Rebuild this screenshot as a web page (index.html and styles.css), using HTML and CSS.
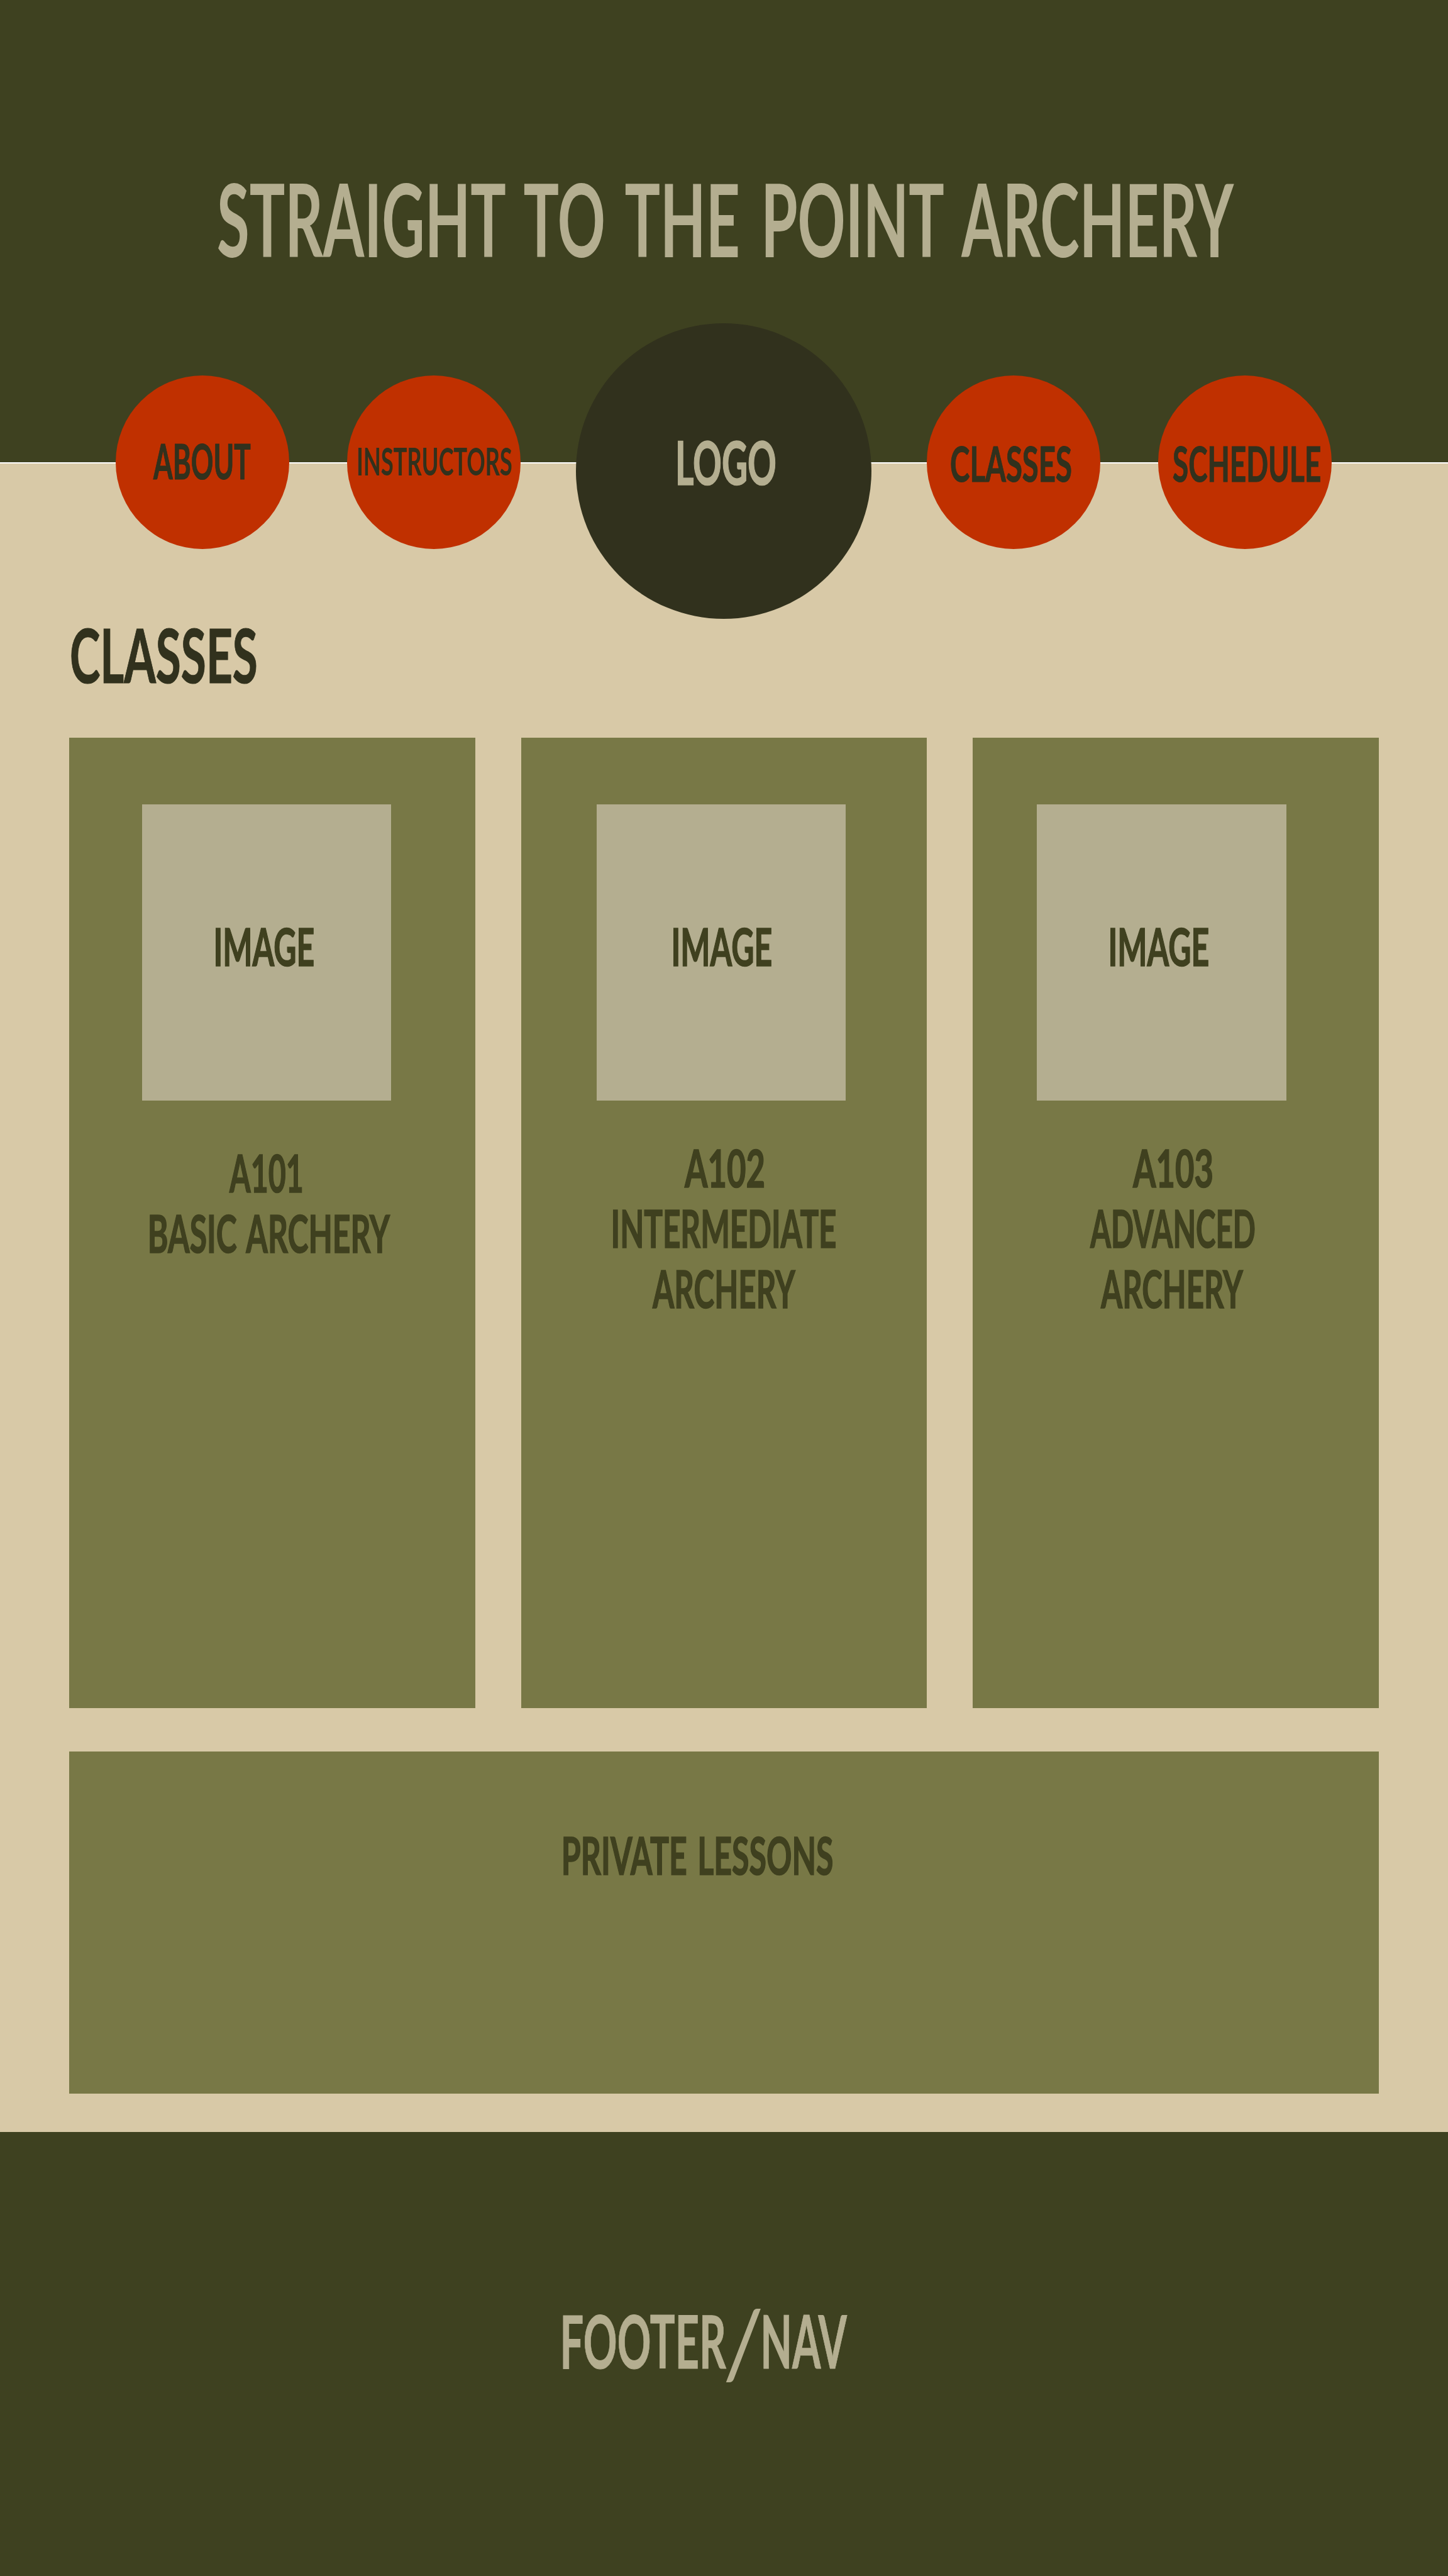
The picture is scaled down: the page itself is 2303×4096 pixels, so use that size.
FILE: index.html
```html
<!DOCTYPE html>
<html lang="en">
<head>
<meta charset="utf-8">
<title>Straight to the Point Archery</title>
<link rel="stylesheet" href="styles.css">
</head>
<body>
<header class="banner">
  <h1 class="banner-title">
    <svg class="label label-title" width="1613" height="116"><text x="-4.7" y="116" textLength="2526.6" lengthAdjust="spacingAndGlyphs">STRAIGHT TO THE POINT ARCHERY</text></svg>
  </h1>
</header>
<nav class="nav">
  <a class="disc disc-about"><svg class="label label-nav" width="154" height="55"><text x="0" y="55" textLength="242" lengthAdjust="spacingAndGlyphs">ABOUT</text></svg></a>
  <a class="disc disc-instructors"><svg class="label label-nav-small" width="244" height="44"><text x="-5" y="44" textLength="387" lengthAdjust="spacingAndGlyphs">INSTRUCTORS</text></svg></a>
  <a class="disc disc-logo"><svg class="label label-logo" width="153" height="69"><text x="-7.8" y="69" textLength="251.5" lengthAdjust="spacingAndGlyphs">LOGO</text></svg></a>
  <a class="disc disc-classes"><svg class="label label-nav" width="190" height="55"><text x="-3" y="55" textLength="303" lengthAdjust="spacingAndGlyphs">CLASSES</text></svg></a>
  <a class="disc disc-schedule"><svg class="label label-nav" width="232" height="55"><text x="-3" y="55" textLength="369" lengthAdjust="spacingAndGlyphs">SCHEDULE</text></svg></a>
</nav>
<main class="content">
  <h2 class="section-title"><svg class="label label-heading" width="293" height="86"><text x="-4.7" y="86" textLength="467" lengthAdjust="spacingAndGlyphs">CLASSES</text></svg></h2>
  <section class="cards">
    <article class="card card-basic">
      <div class="thumb"><svg class="label label-card" width="155" height="60"><text x="-5.5" y="60" textLength="251" lengthAdjust="spacingAndGlyphs">IMAGE</text></svg></div>
      <div class="caption">
        <svg class="label label-card code" width="112" height="60"><text x="-1.5" y="60" textLength="184" lengthAdjust="spacingAndGlyphs">A101</text></svg>
        <svg class="label label-card" width="381" height="60"><text x="-6.5" y="60" textLength="602" lengthAdjust="spacingAndGlyphs">BASIC ARCHERY</text></svg>
      </div>
    </article>
    <article class="card card-intermediate">
      <div class="thumb"><svg class="label label-card" width="155" height="60"><text x="-5.5" y="60" textLength="251" lengthAdjust="spacingAndGlyphs">IMAGE</text></svg></div>
      <div class="caption">
        <svg class="label label-card" width="125" height="60"><text x="0" y="60" textLength="200" lengthAdjust="spacingAndGlyphs">A102</text></svg>
        <svg class="label label-card" width="353" height="60"><text x="-5.5" y="60" textLength="561" lengthAdjust="spacingAndGlyphs">INTERMEDIATE</text></svg>
        <svg class="label label-card" width="227" height="60"><text x="0" y="60" textLength="354.5" lengthAdjust="spacingAndGlyphs">ARCHERY</text></svg>
      </div>
    </article>
    <article class="card card-advanced">
      <div class="thumb"><svg class="label label-card" width="155" height="60"><text x="-5.5" y="60" textLength="251" lengthAdjust="spacingAndGlyphs">IMAGE</text></svg></div>
      <div class="caption">
        <svg class="label label-card" width="125" height="60"><text x="0" y="60" textLength="200" lengthAdjust="spacingAndGlyphs">A103</text></svg>
        <svg class="label label-card" width="261" height="60"><text x="0" y="60" textLength="411" lengthAdjust="spacingAndGlyphs">ADVANCED</text></svg>
        <svg class="label label-card" width="226" height="60"><text x="0" y="60" textLength="353" lengthAdjust="spacingAndGlyphs">ARCHERY</text></svg>
      </div>
    </article>
  </section>
  <section class="private">
    <svg class="label label-card" width="427" height="60"><text x="-6.5" y="60" textLength="676" lengthAdjust="spacingAndGlyphs">PRIVATE LESSONS</text></svg>
  </section>
</main>
<footer class="footer">
  <svg class="label label-footer" width="450" height="84"><text x="-8.5" y="84"><tspan textLength="413" lengthAdjust="spacingAndGlyphs">FOOTER</tspan><tspan class="slash" x="397" dy="15" textLength="101" lengthAdjust="spacingAndGlyphs">/</tspan><tspan x="490" dy="-15" textLength="214.5" lengthAdjust="spacingAndGlyphs">NAV</tspan></text></svg>
</footer>
</body>
</html>
```
FILE: styles.css
```css
* { box-sizing: border-box; }
body {
  margin: 0;
  width: 2303px;
  height: 4096px;
  display: flex;
  flex-direction: column;
  background: #d8c9a7;
  font-family: Lato, "Liberation Sans", sans-serif;
  font-weight: 700;
}
h1, h2 { margin: 0; font-size: inherit; }

/* Condensed display lettering */
.label { display: block; flex: none; overflow: visible; }
.label text {
  transform: scaleX(0.64);
  vector-effect: non-scaling-stroke;
}

.banner {
  height: 737px;
  flex: none;
  padding: 292.5px 0 0 348px;
  background: #3e4120;
  border-bottom: 2px solid #fff;
}
.label-title { fill: #b4ae90; font-size: 161px; word-spacing: 18px; }

.nav {
  flex: none;
  display: flex;
  align-items: flex-start;
  height: 471px;
  margin-top: -223.4px;
  padding-left: 184px;
}
.disc {
  flex: none;
  display: flex;
  align-items: center;
  justify-content: center;
  width: 276px;
  height: 276px;
  margin-top: 83.1px;
  border-radius: 50%;
  background: #c03000;
  fill: #31311d;
}
.disc-about { padding-right: 3px; }
.disc-instructors { margin-left: 92px; padding-left: 3px; padding-bottom: 1px; }
.disc-logo {
  width: 470.5px;
  height: 470.5px;
  margin: 0 87.5px;
  padding: 0 0 24px 10px;
  background: #31311d;
  fill: #b4ae90;
}
.disc-classes { padding: 7px 8px 0 0; }
.disc-schedule { margin-left: 92.5px; padding: 7px 0 0 5px; }
.label-nav { font-size: 77px; stroke: #31311d; stroke-width: 1px; }
.label-nav-small { font-size: 61.5px; }
.label-logo { font-size: 96px; stroke: #b4ae90; stroke-width: 1.4px; }

.content { flex: none; padding: 15px 110.4px 0; }
.section-title { padding-left: 4px; }
.label-heading { fill: #31311d; font-size: 119px; stroke: #31311d; stroke-width: 1px; }

.cards {
  display: grid;
  grid-template-columns: repeat(3, 645.3px);
  justify-content: space-between;
  margin-top: 87.5px;
}
.card {
  height: 1543px;
  padding-top: 105.5px;
  background: #787846;
  fill: #3f401f;
}
.card-basic { padding-left: 115.6px; }
.card-intermediate { padding-left: 120px; }
.card-advanced { padding-left: 102px; }
.thumb {
  display: flex;
  align-items: center;
  width: 396.5px;
  height: 471px;
  padding: 0 0 16px 117px;
  background: #b4ae90;
}
.card-intermediate .thumb { padding-left: 121.7px; }
.caption {
  display: flex;
  flex-direction: column;
  align-items: center;
  gap: 36px;
  width: 396.5px;
  margin-top: 78px;
}
.card-basic .caption { margin-top: 86px; padding-left: 7px; width: 400px; }
.card-intermediate .caption { padding-left: 8px; }
.card-advanced .caption { width: 430px; }
.code { margin-right: 15px; }
.label-card {
  font-size: 83px;
  word-spacing: 7px;
  stroke: #3f401f;
  stroke-width: 1.4px;
}

.private {
  height: 544px;
  margin-top: 69px;
  padding: 136px 0 0 786.7px;
  background: #787846;
  fill: #3f401f;
}

.footer {
  flex: 1;
  margin-top: 61px;
  padding: 291.5px 0 0 896px;
  background: #3e4120;
}
.label-footer { fill: #b4ae90; font-size: 117px; stroke: #b4ae90; stroke-width: 1px; }
.slash { font-size: 149px; font-weight: 400; stroke: none; }
```
